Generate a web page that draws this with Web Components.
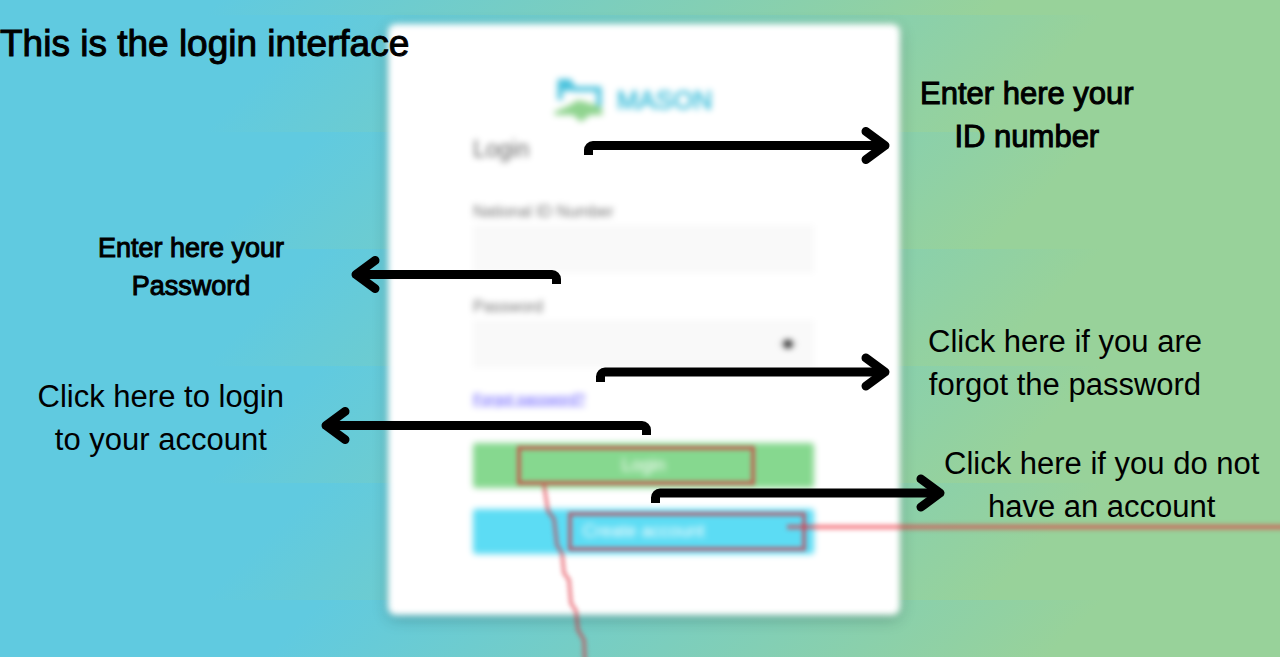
<!DOCTYPE html>
<html lang="en">
<head>
<meta charset="utf-8">
<meta name="viewport" content="width=device-width, initial-scale=1">
<title>Mason login guide</title>
<style>
  body { margin: 0; font-family: "Liberation Sans", Arial, sans-serif; color: #000; }
</style>
</head>
<body>
<login-guide>
  <guide-note slot="left" size="title">This is the login interface</guide-note>
  <guide-note slot="left" size="small" class="password">Enter here your<br>Password</guide-note>
  <guide-note slot="left" class="submit">Click here to login<br>to your account</guide-note>
  <login-card slot="card"></login-card>
  <guide-note slot="right" size="strong" class="id">Enter here your<br>ID number</guide-note>
  <guide-note slot="right" class="forgot">Click here if you are<br>forgot the password</guide-note>
  <guide-note slot="right" class="create">Click here if you do not<br>have an account</guide-note>
</login-guide>

<script>
const define = (name, html) => customElements.define(name, class extends HTMLElement {
  constructor() {
    super();
    const t = document.createElement('template');
    t.innerHTML = html;
    this.attachShadow({ mode: 'open' }).append(t.content.cloneNode(true));
  }
});

define('guide-note', `
  <style>
    :host { display: block; position: relative; z-index: 2; font-size: 31px; line-height: 43px; text-align: center; white-space: nowrap; }
    :host([size="title"]) { font-size: 37px; line-height: 44px; -webkit-text-stroke: 1px #000; }
    :host([size="strong"]) { -webkit-text-stroke: 1px #000; }
    :host([size="small"]) { font-size: 27px; line-height: 38px; -webkit-text-stroke: 1px #000; }
  </style>
  <slot></slot>`);

define('brand-logo', `
  <style>
    :host { display: flex; align-items: center; justify-content: center; gap: 12px; height: 44px; color: #4cc3dd; font-size: 26px; line-height: 44px; -webkit-text-stroke: 1px #4cc3dd; }
    svg { display: block; }
  </style>
  <svg width="52" height="44" viewBox="0 0 52 44" aria-hidden="true">
    <path d="M7 22V5H17L21 11H46V29" fill="none" stroke="#4cc3dd" stroke-width="5"/>
    <path d="M5 1H18V13H5Z" fill="#4cc3dd"/>
    <path d="M1 34L15 28L25 22L36 25L48 29L50 37H37L28 44L20 37H2Z" fill="#90d48f"/>
  </svg>
  <span>MASON</span>`);

customElements.define('form-field', class extends HTMLElement {
  connectedCallback() {
    if (this.shadowRoot) return;
    const type = this.getAttribute('type');
    this.attachShadow({ mode: 'open' }).innerHTML = `
      <style>
        :host { display: block; }
        label { display: block; margin-bottom: 3px; font-size: 16px; line-height: 20px; color: #777; }
        .box { position: relative; }
        input { display: block; box-sizing: border-box; width: 100%; height: 48px; padding: 0 48px 0 12px; border: 0; background: #f9f9f9; font: inherit; }
        button { position: absolute; right: 14px; top: 12px; width: 24px; height: 24px; padding: 0; border: 0; background: none; }
        svg { display: block; }
      </style>
      <label for="field">${this.getAttribute('label')}</label>
      <div class="box"><input id="field" type="${type}">${type === 'password' ? `
        <button type="button" aria-label="Show password"><svg width="24" height="24" viewBox="0 0 24 24">
          <path d="M3 12Q12 3 21 12Q12 21 3 12Z" fill="#d4d4d4"/><circle cx="12" cy="12" r="4" fill="#111"/>
        </svg></button>` : ''}</div>`;
  }
});

define('login-card', `
  <style>
    :host { display: block; box-sizing: border-box; padding: 54px 86px 61px 85px; border-radius: 8px; background: #fff; box-shadow: 0 4px 14px rgba(0, 40, 40, .28); }
    brand-logo { margin-bottom: 13px; padding-right: 22px; }
    h1 { margin: 0 0 39px; font-size: 23px; line-height: 28px; font-weight: 400; color: #666; }
    form-field { margin-bottom: 24px; }
    form-field.last { margin-bottom: 21px; }
    a { display: block; width: max-content; margin-bottom: 34px; font-size: 14px; line-height: 20px; color: #5f54ff; }
    button { display: block; width: 100%; height: 45px; padding: 0; border: 0; border-radius: 3px; font: 18px "Liberation Sans", Arial, sans-serif; color: #fff; }
    .login { margin-bottom: 21px; background: #86d88f; }
    .create { background: #5cdcf4; }
  </style>
  <form>
    <brand-logo></brand-logo>
    <h1>Login</h1>
    <form-field label="National ID Number" type="text"></form-field>
    <form-field class="last" label="Password" type="password"></form-field>
    <a href="#forgot">Forgot password?</a>
    <button class="login" type="button">Login</button>
    <button class="create" type="button">Create account</button>
  </form>`);

define('trace-marks', `
  <style>
    :host { display: block; }
    svg { display: block; overflow: visible; }
  </style>
  <svg width="1280" height="657" viewBox="0 0 1280 657" fill="none" stroke="#e02030" stroke-opacity=".6" stroke-width="4" aria-hidden="true">
    <rect x="519" y="448" width="234" height="35"/>
    <rect x="570" y="514" width="234" height="35"/>
    <path d="M544 485L548 511L554 519L557 545L562 553L564 573L569 580L571 603L576 611L578 630L584 640L585 664" stroke-opacity=".5"/>
    <path d="M787 527H2400" stroke="#f02030" stroke-opacity=".5" stroke-width="5"/>
  </svg>`);

define('guide-arrows', `
  <style>
    :host { display: block; }
    svg { display: block; overflow: visible; }
  </style>
  <svg width="1280" height="657" viewBox="0 0 1280 657" fill="none" stroke="#000" stroke-width="9" stroke-linejoin="round" aria-hidden="true">
    <path d="M588.5 155V150A4.5 4.5 0 0 1 593 145.5H884"/>
    <path d="M556.5 284V279A4.5 4.5 0 0 0 552 274.5H357"/>
    <path d="M600.5 382V376.5A4.5 4.5 0 0 1 605 372H884"/>
    <path d="M646.5 435V430A4.5 4.5 0 0 0 642 425.5H327"/>
    <path d="M655.5 503V497.5A4.5 4.5 0 0 1 660 493H939"/>
    <g stroke-linecap="round">
      <path d="M866 131.5L885 145.5L866 159.5"/>
      <path d="M375 260.5L356 274.5L375 288.5"/>
      <path d="M866 358L885 372L866 386"/>
      <path d="M345 411.5L326 425.5L345 439.5"/>
      <path d="M921 479L940 493L921 507"/>
    </g>
  </svg>`);

define('login-guide', `
  <style>
    :host {
      display: grid; grid-template-columns: calc(50% - 252px) 512px 1fr; position: relative; overflow: hidden;
      min-height: 100vh;
      background: linear-gradient(135deg, #60cae0 23%, #98d29a 79%) 0 15px / 100% 117px;
    }
    .left { display: flex; flex-direction: column; align-items: flex-end; box-sizing: border-box; padding: 22px 104px 0 0; }
    .right { display: flex; flex-direction: column; align-items: flex-start; padding-top: 72px; }
    .card { padding: 24px 0 42px; filter: blur(3px); }
    .layer { position: absolute; top: 0; left: 50%; width: 1280px; margin-left: -640px; pointer-events: none; }
    .marks { filter: blur(2px); }
    ::slotted([size="title"]) { align-self: flex-start; margin-bottom: 163px; }
    ::slotted(.password) { margin-bottom: 70px; }
    ::slotted(.id) { margin: 0 0 162px 20px; }
    ::slotted(.forgot) { margin: 0 0 36px 28px; }
    ::slotted(.create) { margin-left: 44px; }
  </style>
  <div class="left"><slot name="left"></slot></div>
  <div class="card"><slot name="card"></slot></div>
  <div class="right"><slot name="right"></slot></div>
  <trace-marks class="layer marks"></trace-marks>
  <guide-arrows class="layer"></guide-arrows>`);
</script>
</body>
</html>
